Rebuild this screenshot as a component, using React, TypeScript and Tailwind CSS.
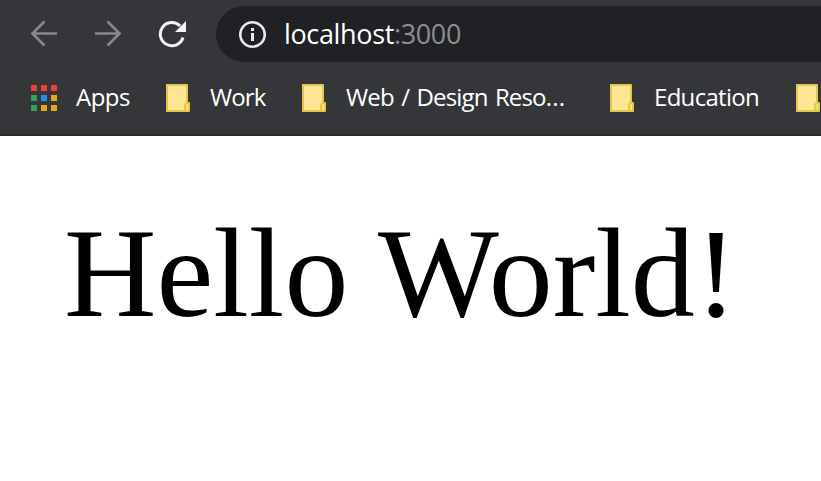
import React from "react";

const appColors = [
  "bg-[#ea4335]", "bg-[#ea4335]", "bg-[#ea4335]",
  "bg-[#34a05a]", "bg-[#2490f5]", "bg-[#eba80c]",
  "bg-[#34a05a]", "bg-[#eba80c]", "bg-[#eba80c]",
];

function Folder() {
  return (
    <svg width="24" height="28" viewBox="0 0 24 28" className="shrink-0">
      <path d="M0 0h21a1 1 0 0 1 1 1v17h1a1 1 0 0 1 1 1v8a1 1 0 0 1-1 1H0z" fill="#e4c649" />
      <path d="M2 2h18v16l-2 2v6H2z" fill="#ffe694" />
      <path d="M20.5 20h1.5v6h-1.5z" fill="#ffe694" />
    </svg>
  );
}

function Bookmark({ label, more, className }: { label: string; more?: string; className: string }) {
  return (
    <div className="flex shrink-0 items-center gap-5">
      <Folder />
      <span className={`whitespace-nowrap pb-[2px] ${className}`}>
        {label}
        {more && <span className="tracking-[0.2px]">{more}</span>}
      </span>
    </div>
  );
}

export default function App() {
  return (
    <div className="h-[481px] w-[821px] overflow-hidden bg-white">
      <header className="h-[136px] border-b-2 border-[#29292c] bg-[#35363a] font-['Open_Sans','Noto_Sans',sans-serif]">
        <nav className="flex h-[62px] items-start pt-[6px]">
          <div className="flex h-14 w-[216px] shrink-0 items-center gap-[36px] pl-[30px]">
            <svg width="28" height="28" viewBox="0 0 28 28" fill="none" stroke="#87888b" strokeWidth="2.7">
              <path d="M27 13.5H2.5M14.5 1.5l-12 12 12 12" />
            </svg>
            <svg width="28" height="28" viewBox="0 0 28 28" fill="none" stroke="#87888b" strokeWidth="2.7">
              <path d="M1 13.5h24.5M13.5 1.5l12 12-12 12" />
            </svg>
            <svg width="28" height="28" viewBox="0 0 28 28">
              <path d="M22.1 5.9A11.6 11.6 0 1 0 25 17.5" fill="none" stroke="#f1f3f4" strokeWidth="3" />
              <path d="M28 1v11H17z" fill="#f1f3f4" />
            </svg>
          </div>
          <div className="flex h-14 flex-1 items-center rounded-l-full bg-[#202124] pl-[22px]">
            <svg width="28" height="28" viewBox="0 0 28 28" className="shrink-0">
              <circle cx="14.5" cy="14.5" r="12.2" fill="none" stroke="#e8eaed" strokeWidth="2.6" />
              <path d="M13 8h3v3h-3zM13 13h3v8h-3z" fill="#e8eaed" />
            </svg>
            <span className="ml-[18px] whitespace-nowrap text-[27px] leading-[56px] tracking-[-0.35px] text-white">
              localhost<span className="text-[#8d8f92]">:3000</span>
            </span>
          </div>
        </nav>
        <div className="flex h-[72px] items-center pl-[31px] text-[24px] leading-[32px] text-white">
          <div className="grid w-[26px] shrink-0 grid-cols-3 gap-1">
            {appColors.map((c, i) => (
              <i key={i} className={`size-[6px] ${c}`} />
            ))}
          </div>
          <span className="ml-[19px] w-[90px] shrink-0 pb-[2px] tracking-[-0.5px]">Apps</span>
          <Bookmark label="Work" className="w-[92px] tracking-[-0.9px]" />
          <Bookmark label="Web / Design Reso" more="..." className="w-[264px] tracking-[-0.85px] [word-spacing:2px]" />
          <Bookmark label="Education" className="w-[142px] tracking-[-0.7px]" />
          <Folder />
        </div>
      </header>
      <main className="pl-16 pt-[63px] font-['Liberation_Serif',serif] text-[128px] leading-[148px] text-black">
        <p className="whitespace-nowrap">Hello World!</p>
      </main>
    </div>
  );
}
